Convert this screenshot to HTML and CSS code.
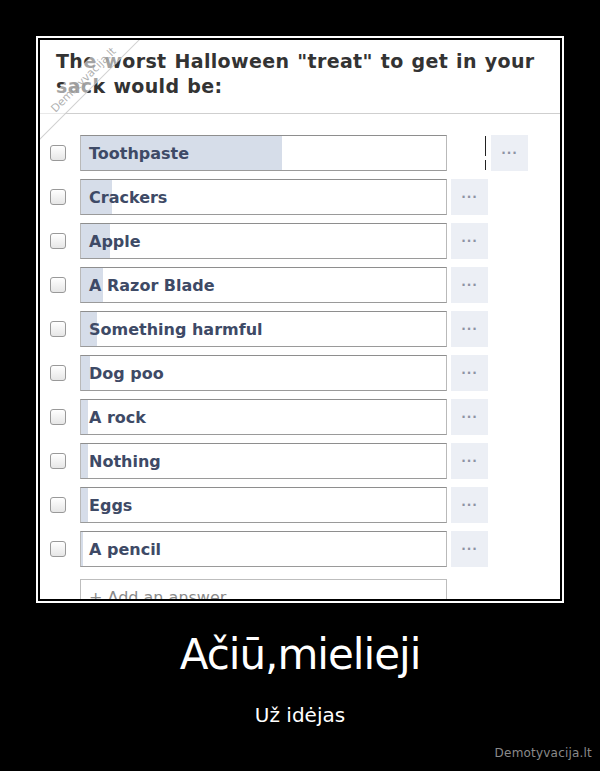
FILE: index.html
```html
<!DOCTYPE html>
<html lang="lt">
<head>
  <meta charset="UTF-8">
  <meta name="viewport" content="width=device-width, initial-scale=1.0">
  <title>Ačiū,mielieji</title>
  <link rel="stylesheet" href="styles.css">
</head>
<body>
  <div class="rėmas">
    <div class="nuotrauka">
      <h1 class="klausimas">The worst Halloween "treat" to get in your sack would be:</h1>
      <div class="atsakymai">
        <div class="atsakymas">
          <span class="žymė"></span>
          <div class="juosta"><span class="užpildas" style="width: 55%"></span><span class="tekstas">Toothpaste</span></div>
          <span class="tarpas"><i class="žymeklis"></i></span>
          <span class="daugiau">···</span>
        </div>
        <div class="atsakymas">
          <span class="žymė"></span>
          <div class="juosta"><span class="užpildas" style="width: 8.5%"></span><span class="tekstas">Crackers</span></div>
          <span class="daugiau">···</span>
        </div>
        <div class="atsakymas">
          <span class="žymė"></span>
          <div class="juosta"><span class="užpildas" style="width: 8%"></span><span class="tekstas">Apple</span></div>
          <span class="daugiau">···</span>
        </div>
        <div class="atsakymas">
          <span class="žymė"></span>
          <div class="juosta"><span class="užpildas" style="width: 6%"></span><span class="tekstas">A Razor Blade</span></div>
          <span class="daugiau">···</span>
        </div>
        <div class="atsakymas">
          <span class="žymė"></span>
          <div class="juosta"><span class="užpildas" style="width: 4.5%"></span><span class="tekstas">Something harmful</span></div>
          <span class="daugiau">···</span>
        </div>
        <div class="atsakymas">
          <span class="žymė"></span>
          <div class="juosta"><span class="užpildas" style="width: 2.5%"></span><span class="tekstas">Dog poo</span></div>
          <span class="daugiau">···</span>
        </div>
        <div class="atsakymas">
          <span class="žymė"></span>
          <div class="juosta"><span class="užpildas" style="width: 1.8%"></span><span class="tekstas">A rock</span></div>
          <span class="daugiau">···</span>
        </div>
        <div class="atsakymas">
          <span class="žymė"></span>
          <div class="juosta"><span class="užpildas" style="width: 1.8%"></span><span class="tekstas">Nothing</span></div>
          <span class="daugiau">···</span>
        </div>
        <div class="atsakymas">
          <span class="žymė"></span>
          <div class="juosta"><span class="užpildas" style="width: 1.8%"></span><span class="tekstas">Eggs</span></div>
          <span class="daugiau">···</span>
        </div>
        <div class="atsakymas">
          <span class="žymė"></span>
          <div class="juosta"><span class="užpildas" style="width: 0.5%"></span><span class="tekstas">A pencil</span></div>
          <span class="daugiau">···</span>
        </div>
        <div class="atsakymas naujas">
          <span class="tuščia"></span>
          <div class="juosta"><span class="tekstas">+ Add an answer...</span></div>
        </div>
      </div>
      <div class="vandenženklis"><span>Demotyvacija.lt</span></div>
    </div>
  </div>
  <div class="užrašas">
    <h2>Ačiū,mielieji</h2>
    <p>Už idėjas</p>
  </div>
  <div class="svetainė">Demotyvacija.lt</div>
</body>
</html>
```

FILE: styles.css
```css
    body {
      margin: 0;
      background: #000;
      width: 600px;
      height: 771px;
      overflow: hidden;
      font-family: "DejaVu Sans", Verdana, sans-serif;
    }
    .rėmas {
      margin: 36px 0 0 36px;
      width: 520px;
      height: 559px;
      border: 2px solid #fff;
      padding: 2px;
      background: #000;
    }
    .nuotrauka {
      position: relative;
      height: 100%;
      background: #fff;
      overflow: hidden;
    }
    .klausimas {
      margin: 0;
      padding: 9px 10px 0 16px;
      height: 64px;
      border-bottom: 1px solid #cfcfcf;
      font-family: "DejaVu Sans", sans-serif;
      font-size: 19px;
      line-height: 25px;
      font-weight: bold;
      color: #333;
      letter-spacing: 0.35px;
      word-spacing: 1px;
    }
    .atsakymai {
      padding-top: 21px;
      display: flex;
      flex-direction: column;
      gap: 8px;
    }
    .atsakymas {
      display: flex;
      align-items: center;
      height: 36px;
    }
    .žymė {
      width: 16px;
      height: 16px;
      margin: 0 14px 0 10px;
      border: 1px solid #999;
      border-radius: 3px;
      background: linear-gradient(#fff, #e6e6e6);
      box-sizing: border-box;
    }
    .tuščia {
      width: 40px;
    }
    .juosta {
      position: relative;
      width: 367px;
      height: 36px;
      box-sizing: border-box;
      border: 1px solid #b9b9b9;
      border-top-color: #8e8e8e;
      border-bottom-color: #9a9a9a;
      display: flex;
      align-items: center;
    }
    .užpildas {
      position: absolute;
      left: 0;
      top: 0;
      bottom: 0;
      background: #d6dde9;
    }
    .tekstas {
      position: relative;
      padding-left: 8px;
      font-family: "DejaVu Sans", sans-serif;
      font-size: 16px;
      font-weight: bold;
      color: #3e4a66;
    }
    .naujas {
      margin-top: 4px;
    }
    .naujas .juosta {
      border-color: #bdbdbd;
      border-bottom: none;
      align-items: flex-start;
    }
    .naujas .tekstas {
      font-weight: normal;
      color: #8a8a8a;
      font-size: 16px;
      padding-top: 8px;
    }
    .daugiau {
      width: 37px;
      height: 36px;
      margin-left: 4px;
      background: #eceff5;
      color: #8d93a3;
      font-size: 12px;
      font-weight: bold;
      display: flex;
      align-items: center;
      justify-content: center;
      letter-spacing: 1px;
    }
    .tarpas {
      position: relative;
      width: 40px;
      height: 36px;
    }
    .žymeklis {
      position: absolute;
      right: 1px;
      top: 1px;
      bottom: 1px;
      width: 1.5px;
      background: linear-gradient(#222 0, #222 60%, transparent 60%, transparent 72%, #222 72%);
    }
    .vandenženklis {
      position: absolute;
      left: -60px;
      top: 32px;
      width: 200px;
      height: 22px;
      transform: rotate(-45deg);
      background: rgba(255, 255, 255, 0.55);
      border-bottom: 1px solid rgba(190, 190, 190, 0.7);
      display: flex;
      justify-content: center;
      align-items: center;
    }
    .vandenženklis span {
      font-family: "DejaVu Sans", sans-serif;
      font-size: 11px;
      color: rgba(150, 150, 150, 0.75);
      padding-left: 10px;
    }
    .užrašas {
      text-align: center;
      color: #fff;
    }
    .užrašas h2 {
      margin: 27px 0 0 0;
      font-family: "DejaVu Sans", Verdana, sans-serif;
      font-weight: normal;
      font-size: 42px;
      line-height: 50px;
      letter-spacing: -1px;
    }
    .užrašas p {
      margin: 23px 0 0 0;
      font-size: 20px;
      line-height: 24px;
    }
    .svetainė {
      text-align: right;
      margin: 19px 8px 0 0;
      color: #8a8a8a;
      font-size: 12px;
      letter-spacing: 0.2px;
      word-spacing: -1px;
    }
```
